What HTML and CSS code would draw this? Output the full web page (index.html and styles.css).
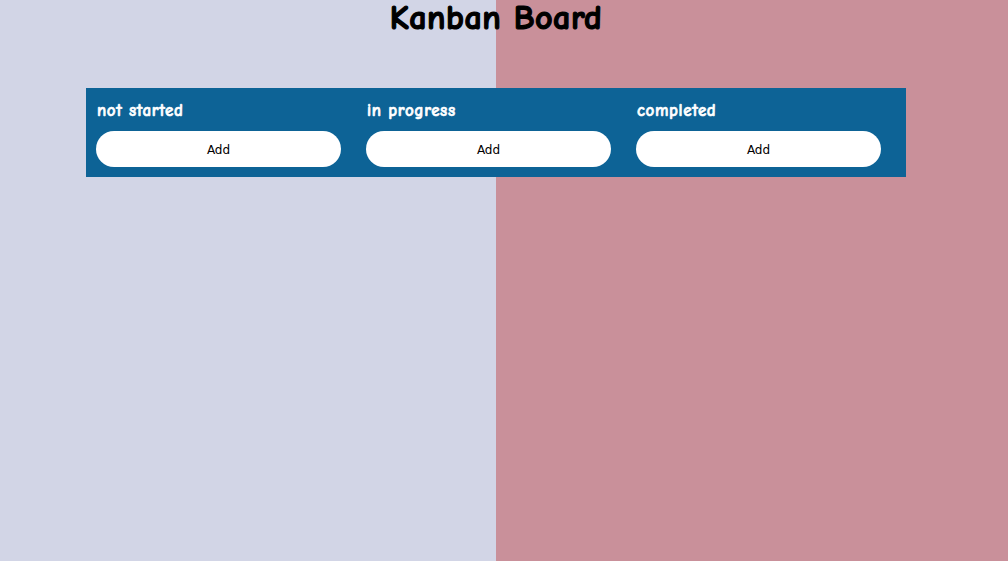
FILE: index.html
```html
<!DOCTYPE html>
<html lang="en">
<head>
<meta charset="utf-8">
<title>Kanban Board</title>
<link rel="stylesheet" href="styles.css">
</head>
<body>
<div class="page">
  <h1 class="title">Kanban Board</h1>
  <main class="board">
    <section class="column">
      <h2 class="column-title">not started</h2>
      <button class="add-btn">Add</button>
    </section>
    <section class="column">
      <h2 class="column-title">in progress</h2>
      <button class="add-btn">Add</button>
    </section>
    <section class="column">
      <h2 class="column-title">completed</h2>
      <button class="add-btn">Add</button>
    </section>
  </main>
</div>
</body>
</html>
```
FILE: styles.css
```css
html {
  height: 100%;
  background: linear-gradient(to right, #d2d5e6 0, #d2d5e6 496px, #c9909a 496px, #c9909a 100%);
}
body {
  margin: 0;
  height: 100%;
  font-family: "Comic Sans MS", "Comic Neue", "DejaVu Sans", sans-serif;
}
.page {
  width: 992px;
}
.title {
  margin: 0;
  text-align: center;
  font-size: 34px;
  line-height: 36px;
  font-weight: bold;
  color: #000;
  -webkit-text-stroke: 1.2px #000;
  letter-spacing: 0.5px;
}
.board {
  width: 820px;
  box-sizing: border-box;
  margin: 52px auto 0;
  background: #0d6396;
  padding: 10px 25px 10px 10px;
  display: flex;
  gap: 25px;
}
.column {
  width: 245px;
  display: flex;
  flex-direction: column;
}
.column-title {
  margin: 0 0 0 1px;
  color: #fff;
  font-size: 17px;
  line-height: 25px;
  font-weight: bold;
  height: 33px;
  -webkit-text-stroke: 0.6px #fff;
  letter-spacing: 0.6px;
}
.add-btn {
  width: 245px;
  height: 36px;
  border: none;
  border-radius: 18px;
  background: #fff;
  color: #000;
  font-family: "DejaVu Sans", sans-serif;
  font-size: 12px;
  padding: 1px 0 0;
}
```
